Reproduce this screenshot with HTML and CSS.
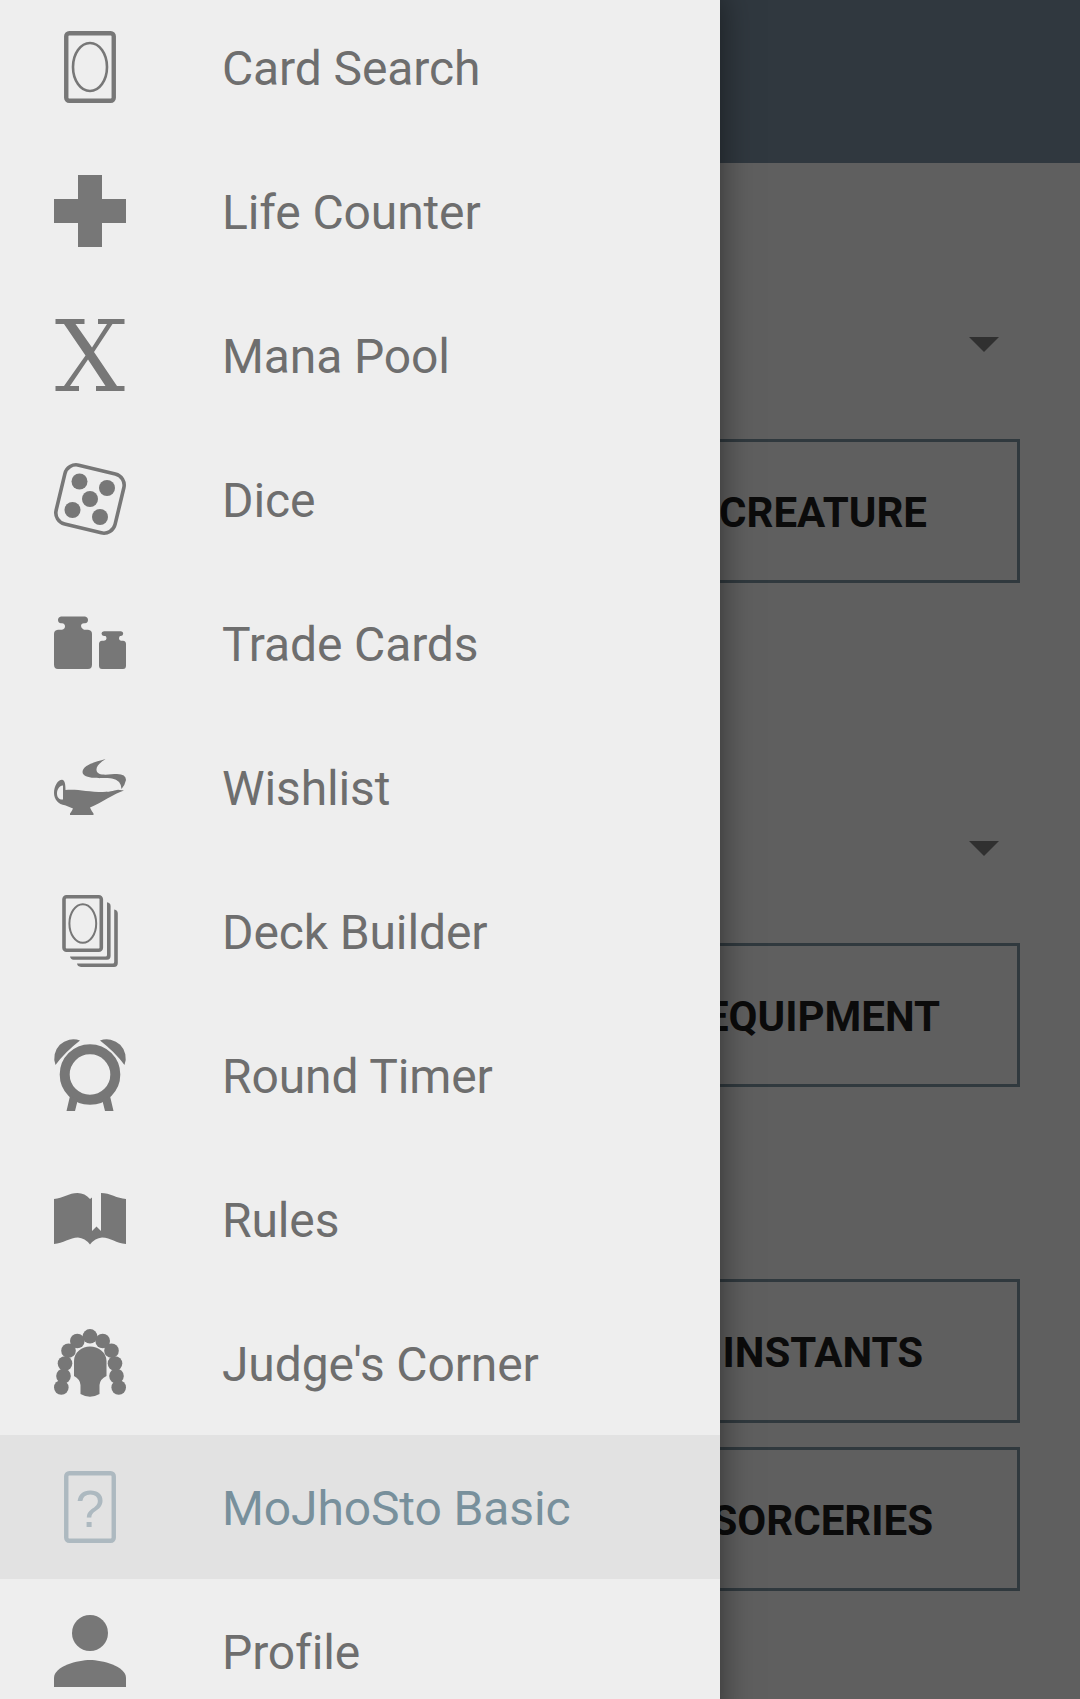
FILE: index.html
```html
<!DOCTYPE html>
<html lang="en">
<head>
<meta charset="utf-8">
<title>MoJhoSto Basic</title>
<link rel="stylesheet" href="styles.css">
</head>
<body>
<div class="screen">
  <div class="page">
    <header class="appbar"></header>
    <main class="content">
      <section class="group">
        <div class="spinner"><span class="caret"></span></div>
        <div class="button button-creature">CREATURE</div>
      </section>
      <section class="group">
        <div class="spinner"><span class="caret"></span></div>
        <div class="button button-equipment">EQUIPMENT</div>
      </section>
      <section class="group group-spells">
        <div class="button button-instants">INSTANTS</div>
        <div class="button button-sorceries">SORCERIES</div>
      </section>
    </main>
  </div>
  <nav class="drawer">
    <a class="item"><svg class="icon" viewBox="0 0 72 72"><g fill="none" stroke="currentColor"><rect x="12.25" y="2.25" width="47.5" height="67.5" rx="3" stroke-width="4.4"/><ellipse cx="36" cy="36" rx="17" ry="24" stroke-width="2.6"/></g></svg><span class="label">Card Search</span></a>
    <a class="item"><svg class="icon" viewBox="0 0 72 72"><path d="M24 0h24v24h24v24H48v24H24V48H0V24h24z"/></svg><span class="label">Life Counter</span></a>
    <a class="item"><svg class="icon" viewBox="0 0 72 72"><path d="M1.500 0H30.500v5H21.500L38 28.500 53 5H44V0H70.500v5H58.500L40 33 63 67h7.500v5H42V67h9.500L34 40.500 16 67h9v5H1.500V67H10L31.500 36.500 10 5H1.500z"/></svg><span class="label">Mana Pool</span></a>
    <a class="item"><svg class="icon" viewBox="0 0 72 72"><rect x="5.700" y="5.700" width="60.600" height="60.600" rx="11.500" fill="none" stroke="currentColor" stroke-width="3.600" transform="rotate(13.500 36 36)"/><circle cx="25.500" cy="18.500" r="8"/><circle cx="53" cy="25" r="8"/><circle cx="36" cy="36" r="8"/><circle cx="18.500" cy="47" r="8"/><circle cx="46" cy="54" r="8"/></svg><span class="label">Dice</span></a>
    <a class="item"><svg class="icon" viewBox="0 0 72 72"><path d="M7 9.500H31Q34 10 34 13T31 16.200H30Q27 16.500 27 19T30 22.700H34Q38 23 38 27V57.500Q38 62 34 62H4Q0 62 0 57.500V27Q0 23 4 22.700H8Q11 22 11 19.300T8 16.200H7Q4 16 4 13T7 9.500zM50 24.300H67Q69.200 24.500 69.200 26.600T67 29H66Q65 29.500 65 31.500T67 33.700H69Q72 34 72 37V58.500Q72 62 69 62H48Q45 62 45 58.500V37Q45 34 48 33.700H50Q52.500 33.500 52.500 31.500T51.500 29H50Q47.500 28.500 47.500 26.500T50 24.300z"/></svg><span class="label">Trade Cards</span></a>
    <a class="item"><svg class="icon" viewBox="0 -9 72 72"><path fill-rule="evenodd" d="M11.500 30C23 28.800 34 32 49 32C58 32 61 30 64 29.800L70 30.500C60 33.500 48 42.500 36 47.500Q37.500 51 39.500 53.500V55H16V53.500Q18 51 19 48.500L11 45.200C4.500 45 0 39 0 33C0 26 4 19.800 8 19.800C11 20 11.500 25 11.500 30zM9 25.500C6 25 3 29 3 33.500S6 40 9 39.500z"/><path d="M51.500-1C47 2 42 6 42.500 10C43 17 56 14 63 14Q72 14 72 20Q71 25 67.500 29Q67 20 58 18.500C49 17.500 29 20 28.500 12C29 5 41 2 51.500-1z"/></svg><span class="label">Wishlist</span></a>
    <a class="item"><svg class="icon" viewBox="0 0 72 72"><g fill="none" stroke="currentColor"><rect x="10" y="1.700" width="37.300" height="53.600" rx="2.500" stroke-width="3.600"/><ellipse cx="28.800" cy="28.500" rx="13.400" ry="19.300" stroke-width="2"/></g><path d="M53 7.300Q56.600 8 56.600 11V61Q56.600 64.700 53 64.700H19.500Q16.500 64.500 16 61.500H51.500Q53 61.500 53 60zM60.200 14.500Q63.800 15.200 63.800 18.500V68Q63.800 72 60 72H27Q23.500 71.800 23 68.600H58.700Q60.200 68.600 60.200 67z"/></svg><span class="label">Deck Builder</span></a>
    <a class="item"><svg class="icon" viewBox="0 0 72 72"><circle cx="36" cy="35.500" r="25.300" fill="none" stroke="currentColor" stroke-width="10"/><path d="M26 1.500A19 19 0 0 0 1.500 26Q11 13 26 1.500zM46 1.500A19 19 0 0 1 70.500 26Q61 13 46 1.500zM16 57L12.500 72H21L24 60zM56 57L59.500 72H51L48 60z"/></svg><span class="label">Round Timer</span></a>
    <a class="item"><svg class="icon" viewBox="0 0 72 72"><path d="M0 16C9 15 15 10 23.500 10Q31 10 36 16L38 14.500V48L42.500 43.500 47 48V10C56 10 63 15.500 72 16V61C62 60.500 57 54.500 48 54.500Q41 55 36 61.500Q31 55 24 54.500C16 54.500 9 60.500 0 61z"/></svg><span class="label">Rules</span></a>
    <a class="item"><svg class="icon" viewBox="0 -2 72 72"><circle cx="36" cy="7.300" r="7.300"/><circle cx="23.300" cy="12" r="7.300"/><circle cx="48.700" cy="12" r="7.300"/><circle cx="14.500" cy="21.700" r="7.300"/><circle cx="57.500" cy="21.700" r="7.300"/><circle cx="11" cy="34.500" r="7.300"/><circle cx="61" cy="34.500" r="7.300"/><circle cx="9.500" cy="47" r="7.300"/><circle cx="62.500" cy="47" r="7.300"/><circle cx="7.300" cy="58.500" r="7.300"/><circle cx="64.700" cy="58.500" r="7.300"/><path d="M20 32C20 23 28 17.500 36 17.500S52.500 23 52.500 32V47Q46 50 45.500 56V65Q36 70.500 26.500 65V56Q26 50 20 47z"/></svg><span class="label">Judge's Corner</span></a>
    <a class="item selected"><svg class="icon" viewBox="0 0 72 72"><rect x="12.250" y="2.250" width="47.500" height="67.500" rx="3" fill="none" stroke="currentColor" stroke-width="4.400"/><text class="mark" x="36" y="56" text-anchor="middle">?</text></svg><span class="label">MoJhoSto Basic</span></a>
    <a class="item"><svg class="icon" viewBox="0 0 72 72"><circle cx="36" cy="18" r="18"/><path d="M0 72V63C0 51 24 45 36 45S72 51 72 63V72z"/></svg><span class="label">Profile</span></a>
  </nav>
</div>
</body>
</html>
```
FILE: styles.css
```css
* { box-sizing: border-box; }
body { margin: 0; font-family: Roboto, "Liberation Sans", sans-serif; }
.screen { display: grid; height: 1699px; overflow: hidden; background: #5f5f5f; }
.page, .drawer { grid-area: 1 / 1; }
.appbar { height: 163px; background: #30383f; }
.content { padding: 108px 60px 0; }
.group { display: flex; flex-direction: column; align-items: flex-end; height: 504px; }
.spinner { display: flex; width: 474px; height: 168px; padding: 66px 21px 0; justify-content: flex-end; }
.caret { width: 30px; height: 15px; background: #303030; clip-path: polygon(0 0, 100% 0, 50% 100%); }
.button { display: flex; flex: none; align-items: center; justify-content: flex-end; width: 474px; height: 144px; border: 3px solid #30393e; color: #0b0b0b; font-size: 42px; font-weight: 700; line-height: 49px; padding-top: 3px; }
.button-creature { padding-right: 90px; }
.button-equipment { padding-right: 77px; }
.button-instants { padding-right: 94px; }
.button-sorceries { padding-right: 84px; }
.group-spells { gap: 24px; }
.drawer { width: 720px; height: 1734px; margin-top: -5px; background: #eee; box-shadow: 0 0 32px rgba(0, 0, 0, .5); z-index: 1; }
.item { display: flex; align-items: center; gap: 96px; height: 144px; padding-left: 54px; color: #6e6e6e; font-size: 48px; line-height: 56px; white-space: nowrap; }
.label { padding-top: 4px; letter-spacing: -.12px; }
.icon { width: 72px; height: 72px; flex: none; overflow: visible; fill: currentColor; color: #777; }
.selected { background: #e2e2e2; color: #78909c; }
.selected .icon { color: #adb9c0; }
.mark { font-family: "Liberation Sans", sans-serif; font-size: 52px; }
```
